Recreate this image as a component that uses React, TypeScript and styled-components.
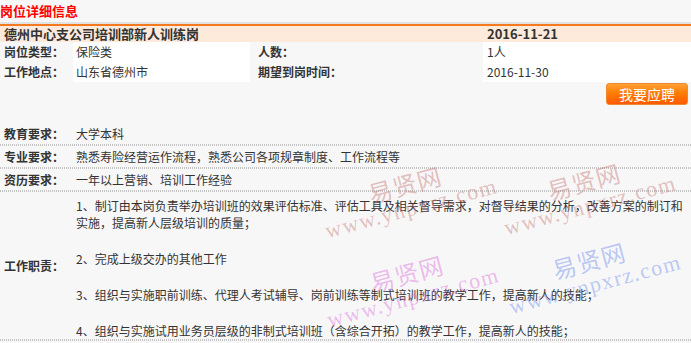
import styled, { createGlobalStyle } from 'styled-components';

const GlobalStyle = createGlobalStyle`
  body {
    margin: 0;
    background: #f7f7f7;
    font-family: "Noto Sans CJK SC", "Noto Sans", sans-serif;
    color: #333;
  }
`;

const info = [
  { label: '岗位类型：', value: '保险类', label2: '人数：', value2: '1人' },
  { label: '工作地点：', value: '山东省德州市', label2: '期望到岗时间：', value2: '2016-11-30' },
];

const requirements = [
  { label: '教育要求：', value: '大学本科' },
  { label: '专业要求：', value: '熟悉寿险经营运作流程，熟悉公司各项规章制度、工作流程等' },
  { label: '资历要求：', value: '一年以上营销、培训工作经验' },
];

const duties = [
  '1、制订由本岗负责举办培训班的效果评估标准、评估工具及相关督导需求，对督导结果的分析，改善方案的制订和实施，提高新人层级培训的质量；',
  '2、完成上级交办的其他工作',
  '3、组织与实施职前训练、代理人考试辅导、岗前训练等制式培训班的教学工作，提高新人的技能；',
  '4、组织与实施试用业务员层级的非制式培训班（含综合开拓）的教学工作，提高新人的技能；',
];

const marks = [
  { left: 318, top: 171, color: 'rgba(200, 120, 120, 0.45)' },
  { left: 497, top: 168, color: 'rgba(200, 120, 120, 0.45)' },
  { left: 320, top: 260, color: 'rgba(220, 110, 220, 0.45)' },
  { left: 502, top: 247, color: 'rgba(110, 140, 240, 0.45)' },
];

export default function App() {
  return (
    <Page>
      <GlobalStyle />
      <SectionTitle>岗位详细信息</SectionTitle>
      <JobHead>
        <span>德州中心支公司培训部新人训练岗</span>
        <JobDate>2016-11-21</JobDate>
      </JobHead>
      <InfoGrid>
        {info.map((r) => (
          <InfoRow key={r.label}>
            <Label>{r.label}</Label>
            <Value $white>{r.value}</Value>
            <Label $pad={8}>{r.label2}</Label>
            <Value $white $pad={4}>{r.value2}</Value>
          </InfoRow>
        ))}
      </InfoGrid>
      <ButtonRow>
        <ApplyButton type="button">我要应聘</ApplyButton>
      </ButtonRow>
      <ReqList>
        {requirements.map((r) => (
          <ReqRow key={r.label}>
            <Label>{r.label}</Label>
            <Value>{r.value}</Value>
          </ReqRow>
        ))}
        <ReqRow>
          <Label>工作职责：</Label>
          <DutyList>
            {duties.map((d) => (
              <Duty key={d}>{d}</Duty>
            ))}
          </DutyList>
        </ReqRow>
      </ReqList>
      {marks.map((m, i) => (
        <Watermark key={i} $color={m.color} style={{ left: m.left, top: m.top }}>
          <MarkName>易贤网</MarkName>
          <MarkUrl>www.ynpxrz.com</MarkUrl>
        </Watermark>
      ))}
    </Page>
  );
}

const Page = styled.div`
  position: relative;
  width: 691px;
  height: 343px;
  overflow: hidden;
  font-size: 12px;
`;

const SectionTitle = styled.div`
  height: 22px;
  line-height: 22px;
  color: #f00;
  font-size: 13px;
  font-weight: bold;
  border-bottom: 2px solid #e2e2e2;
`;

const JobHead = styled.div`
  display: grid;
  grid-template-columns: 483px 1fr;
  height: 16px;
  line-height: 16px;
  padding-left: 4px;
  border-top: 2px solid #f57a1f;
  background: #fdeadb;
  font-size: 13px;
  font-weight: bold;
  color: #333;
`;

const JobDate = styled.span`
  padding-left: 0;
`;

const InfoGrid = styled.div`
  display: flex;
  flex-direction: column;
`;

const InfoRow = styled.div`
  display: grid;
  grid-template-columns: 73px 177px 233px 1fr;
  height: 20px;
  line-height: 20px;
`;

const Label = styled.div<{ $pad?: number }>`
  padding-left: ${(p) => p.$pad ?? 4}px;
  font-weight: bold;
  color: #333;
  align-self: center;
  white-space: nowrap;
`;

const Value = styled.div<{ $white?: boolean; $pad?: number }>`
  padding-left: ${(p) => p.$pad ?? 3}px;
  background: ${(p) => (p.$white ? '#fff' : 'transparent')};
  color: #333;
  white-space: nowrap;
  align-self: stretch;
`;

const ButtonRow = styled.div`
  display: flex;
  justify-content: flex-end;
  padding: 1px 3px 0 0;
`;

const ApplyButton = styled.button`
  width: 82px;
  height: 22px;
  padding: 0;
  border: 1px solid #f08a30;
  border-radius: 3px;
  background: linear-gradient(#ffa033 0%, #ff7a00 50%, #ff5a00 100%);
  color: #fff;
  font-family: inherit;
  font-size: 14px;
  line-height: 20px;
  cursor: pointer;
`;

const ReqList = styled.div`
  margin-top: 18px;
  display: flex;
  flex-direction: column;
`;

const ReqRow = styled.div`
  display: grid;
  grid-template-columns: 73px 1fr;
  min-height: 21px;
  line-height: 21px;
  padding-bottom: 2px;
  background-image: repeating-linear-gradient(to right, #c4c4c4 0 1px, transparent 1px 2px);
  background-size: 100% 2px;
  background-position: bottom left;
  background-repeat: no-repeat;
`;

const DutyList = styled.div`
  padding: 5px 6px 0 3px;
  display: flex;
  flex-direction: column;
  gap: 19px;
`;

const Duty = styled.p`
  margin: 0;
  line-height: 17px;
`;

const Watermark = styled.div<{ $color: string }>`
  position: absolute;
  width: 180px;
  text-align: center;
  color: ${(p) => p.$color};
  transform: rotate(-15deg);
  pointer-events: none;
`;

const MarkName = styled.div`
  font-size: 24px;
  line-height: 26px;
  letter-spacing: 1px;
`;

const MarkUrl = styled.div`
  font-family: "Liberation Serif", serif;
  font-size: 22px;
  line-height: 24px;
  letter-spacing: 1.5px;
`;
